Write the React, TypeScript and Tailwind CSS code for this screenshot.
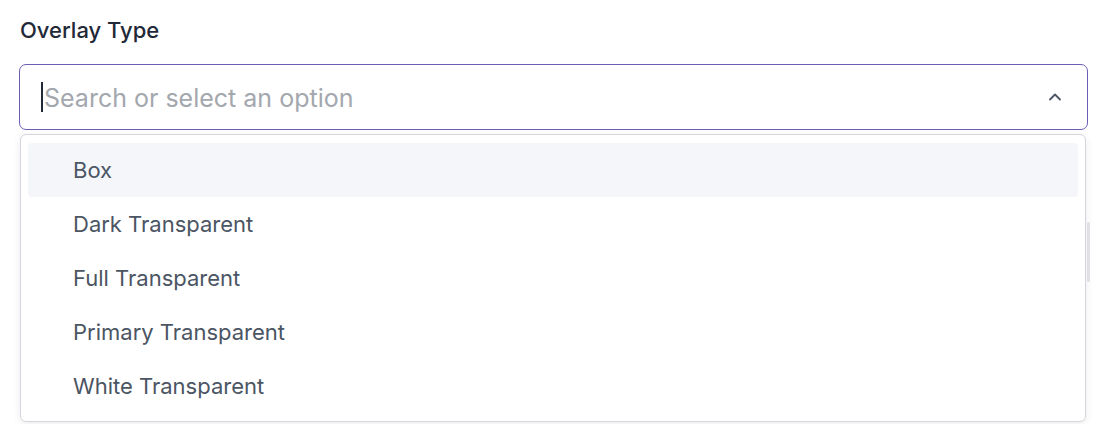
import React from 'react';

const options = ['Box', 'Dark Transparent', 'Full Transparent', 'Primary Transparent', 'White Transparent'];

const ChevronUp = () => (
    <svg width="20" height="20" viewBox="0 0 24 24" fill="none" stroke="#4b5563" strokeWidth="2.2" strokeLinecap="round" strokeLinejoin="round">
        <path d="M6 15l6-6 6 6" />
    </svg>
);

export default function App() {
    return (
        <div className="w-[1100px] h-[424px] bg-white overflow-hidden font-['Inter',sans-serif] flex">
            <div className="flex-1 pl-[19px] pr-[12px] pt-[16px]">
                <label className="block text-[22px] leading-[28px] font-medium text-[#1f2937] pl-[1px]">Overlay Type</label>
                <div className="mt-[20px] h-[66px] rounded-[7px] border-[1.5px] border-[#6b5fb5] flex items-center pl-[21px] pr-[22px]">
                    <span className="w-[2px] h-[30px] bg-[#1f2937] mr-[1px]" />
                    <span className="flex-1 text-[25px] leading-[30px] pt-[2px] text-[#a3a7ae]">Search or select an option</span>
                    <ChevronUp />
                </div>
                <div className="relative mt-[4px] ml-[1px] mr-[2px]">
                    <div className="absolute right-[-4px] top-[88px] w-[3px] h-[60px] bg-[#e4e6ea] rounded-[2px]" />
                    <div className="relative rounded-[6px] border border-[#d3d6dc] shadow-[0_2px_8px_rgba(0,0,0,0.08)] bg-white py-[8px] px-[7px]">
                        {options.map((o, i) => (
                            <div
                                key={o}
                                className={`h-[54px] flex items-center pl-[45px] text-[22px] text-[#4b5563] rounded-[4px] ${i === 0 ? 'bg-[#f5f6fa]' : ''}`}
                            >
                                {o}
                            </div>
                        ))}
                    </div>
                </div>
            </div>
        </div>
    );
}
